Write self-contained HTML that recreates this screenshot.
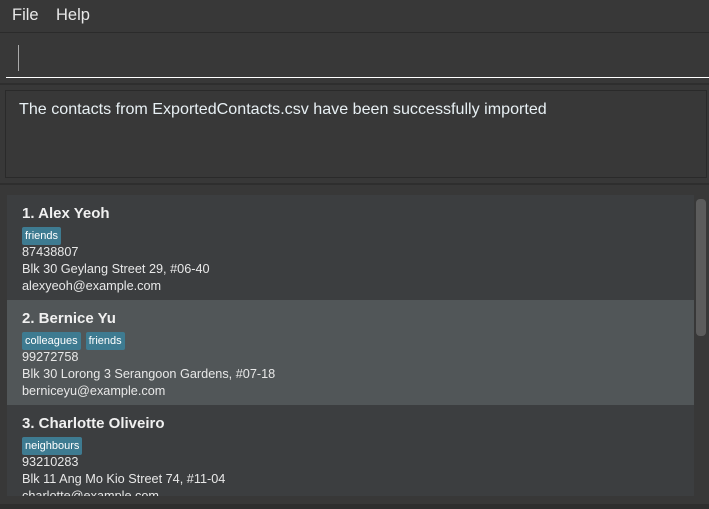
<!DOCTYPE html><html><head><style>
body{margin:0;width:709px;height:509px;background:#383838;font-family:"Liberation Sans",sans-serif;color:#fff;overflow:hidden;position:relative}
.a{position:absolute}
.menu{left:0;top:0;width:709px;height:32px;border-bottom:1px solid #2b2b2b;font-size:16.5px;color:#e8e8e8}
.menu span{position:absolute;top:6px}
.cell{position:absolute;left:7px;width:687px;height:105px;background:#3c3e40}
.cell .n{position:absolute;left:15px;top:10px;font-size:15px;font-weight:bold;color:#f0f0f0}
.tags{position:absolute;left:15px;top:31px}
.tag{display:inline-block;background:#3e7b91;color:#fff;font-size:11px;padding:3px 3px;margin-right:5px;border-radius:2px}
.l{position:absolute;left:15px;font-size:12.7px;color:#e8e8e8}
</style></head><body>
<div class="a menu"><span style="left:12px">File</span><span style="left:56px">Help</span></div>
<div class="a" style="left:18px;top:45px;width:1px;height:26px;background:#aaa"></div>
<div class="a" style="left:6px;top:77px;width:703px;height:1px;background:#fff"></div>
<div class="a" style="left:0;top:83px;width:709px;height:2px;background:#2e2e2e"></div>
<div class="a" style="left:5px;top:90px;width:700px;height:86px;border:1px solid #2a2a2a;background:#383838"></div>
<div class="a" style="left:19px;top:100px;font-size:16.1px;color:#e8f0f4">The contacts from ExportedContacts.csv have been successfully imported</div>
<div class="a" style="left:0;top:183px;width:709px;height:2px;background:#2e2e2e"></div>
<div class="a" style="left:7px;top:195px;width:687px;height:301px;background:#3c3e40"></div>
<div class="cell" style="top:195px"><div class="n">1. Alex Yeoh</div><div class="tags"><span class="tag">friends</span></div>
<div class="l" style="top:50px">87438807</div><div class="l" style="top:67px">Blk 30 Geylang Street 29, #06-40</div><div class="l" style="top:84px">alexyeoh@example.com</div></div>
<div class="cell" style="top:300px;background:#515658"><div class="n">2. Bernice Yu</div><div class="tags"><span class="tag">colleagues</span><span class="tag">friends</span></div>
<div class="l" style="top:50px">99272758</div><div class="l" style="top:67px">Blk 30 Lorong 3 Serangoon Gardens, #07-18</div><div class="l" style="top:84px">berniceyu@example.com</div></div>
<div class="cell" style="top:405px;height:91px;overflow:hidden"><div class="n">3. Charlotte Oliveiro</div><div class="tags"><span class="tag">neighbours</span></div>
<div class="l" style="top:50px">93210283</div><div class="l" style="top:67px">Blk 11 Ang Mo Kio Street 74, #11-04</div><div class="l" style="top:84px">charlotte@example.com</div></div>
<div class="a" style="left:696px;top:199px;width:10px;height:137px;background:#5c5c5c;border-radius:4px"></div>
<div class="a" style="left:0;top:504px;width:709px;height:5px;background:#2e2e2e"></div>
</body></html>
